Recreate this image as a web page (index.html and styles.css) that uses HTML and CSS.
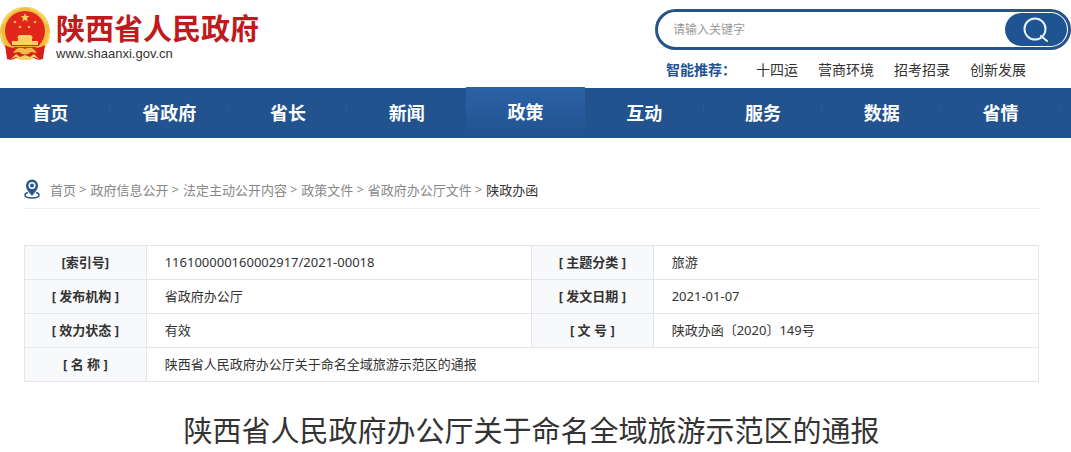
FILE: index.html
```
<!DOCTYPE html>
<html lang="zh-CN">

<head>
  <meta charset="UTF-8" />
  <meta name="viewport" content="width=device-width, initial-scale=1.0" />
  <title>陕西省人民政府</title>
  <link rel="stylesheet" href="styles.css">
</head>

<body>
  <header class="header">
    <a class="logo" href="#">
      <svg class="emblem" viewBox="0 0 52 56" aria-hidden="true">
        <circle cx="25" cy="26" r="25" fill="#f0bd3e" />
        <path d="M3 18Q8 5 20 2M47 18Q42 5 30 2M1 27Q1 36 7 42M49 27Q49 36 43 42" fill="none" stroke="#f8d467" stroke-width="2" />
        <circle cx="25" cy="25" r="20" fill="#e2261c" />
        <path d="M5 39Q11 43 17 42L25 46L33 42Q39 43 45 39L43 53Q38 55 34 52L25 54L16 52Q12 55 7 53Z" fill="#d3201a" />
        <path d="M25 7l1.2 3.1 3.3.1-2.6 2.1.9 3.2-2.8-1.8-2.8 1.8.9-3.2-2.6-2.1 3.3-.1z" fill="#fbd35a" />
        <g fill="#f6bd4a">
          <circle cx="15" cy="16" r="1.3" />
          <circle cx="20" cy="21" r="1.3" />
          <circle cx="29" cy="21" r="1.3" />
          <circle cx="35" cy="16" r="1.3" />
        </g>
        <path d="M19 29h12l2 3h-1v3h6v4H12v-4h6v-3h-1z" fill="#fbd262" />
        <path d="M9 40h32v1H9z" fill="#f5b13c" />
        <path d="M13 47Q18 39 25 43Q32 39 37 47L31 46Q25 51 19 46Z" fill="#f3ba45" />
        <path d="M11 53L16 48L20 51L25 49L30 51L34 48L39 53L34 51L30 54H20L16 51Z" fill="#f8d064" />
      </svg>
      <span class="logo-text">
        <strong class="logo-name">陕西省人民政府</strong>
        <span class="logo-url">www.shaanxi.gov.cn</span>
      </span>
    </a>

    <div class="search">
      <form class="search-box">
        <input class="search-input" type="text" aria-label="请输入关键字" placeholder="请输入关键字" />
        <button class="search-btn" type="button" aria-label="搜索">
          <svg width="26" height="26" viewBox="0 0 26 26" fill="none" stroke="#e6f3fb" stroke-width="2" aria-hidden="true">
            <circle cx="12" cy="12" r="10.500" />
            <path d="M18 19l6 5" stroke-linecap="round" />
          </svg>
        </button>
      </form>
      <div class="hot">
        <strong class="hot-label">智能推荐：</strong>
        <a href="#">十四运</a>
        <a href="#">营商环境</a>
        <a href="#">招考招录</a>
        <a href="#">创新发展</a>
      </div>
    </div>
  </header>

  <nav class="nav">
    <a href="#">首页</a>
    <a href="#">省政府</a>
    <a href="#">省长</a>
    <a href="#">新闻</a>
    <a class="active" href="#">政策</a>
    <a href="#">互动</a>
    <a href="#">服务</a>
    <a href="#">数据</a>
    <a href="#">省情</a>
  </nav>

  <main class="main">
    <div class="crumbs">
      <svg class="pin" width="16" height="20" viewBox="0 0 16 20" aria-hidden="true">
        <path d="M4 13.500C1.500 14 1 15 1 16c0 2 3 3 7 3s7-1 7-3c0-1-.5-2-3-2.500" fill="none" stroke="#2a558c" stroke-width="1.500" />
        <path d="M8 17C5 13 2 10.500 2 6.500a6 6 0 0 1 12 0C14 10.500 11 13 8 17z" fill="#2a558c" />
        <circle cx="8" cy="6.500" r="3.500" fill="#fff" />
        <circle cx="8" cy="6.500" r="2" fill="#2a558c" />
      </svg>
      <a href="#">首页</a><span class="sep">&gt;</span>
      <a href="#">政府信息公开</a><span class="sep">&gt;</span>
      <a href="#">法定主动公开内容</a><span class="sep">&gt;</span>
      <a href="#">政策文件</a><span class="sep">&gt;</span>
      <a href="#">省政府办公厅文件</a><span class="sep">&gt;</span>
      <a class="current" href="#">陕政办函</a>
    </div>

    <table class="info">
      <tr>
        <th>[索引号]</th>
        <td>116100000160002917/2021-00018</td>
        <th>[ 主题分类 ]</th>
        <td>旅游</td>
      </tr>
      <tr>
        <th>[ 发布机构 ]</th>
        <td>省政府办公厅</td>
        <th>[ 发文日期 ]</th>
        <td>2021-01-07</td>
      </tr>
      <tr>
        <th>[ 效力状态 ]</th>
        <td>有效</td>
        <th>[ 文 号 ]</th>
        <td>陕政办函〔2020〕149号</td>
      </tr>
      <tr>
        <th>[ 名 称 ]</th>
        <td colspan="3">陕西省人民政府办公厅关于命名全域旅游示范区的通报</td>
      </tr>
    </table>

    <h1 class="title">陕西省人民政府办公厅关于命名全域旅游示范区的通报</h1>
  </main>
</body>

</html>
```
FILE: styles.css
```
* {
  box-sizing: border-box;
}

body {
  margin: 0;
  font-family: "Noto Sans", "Noto Sans CJK SC", sans-serif;
  font-size: 13px;
  color: #333;
  background: #fff;
  overflow-x: hidden;
}

a {
  color: inherit;
  text-decoration: none;
}

.header {
  display: flex;
  justify-content: space-between;
  height: 88px;
}

.logo {
  display: flex;
  align-items: flex-start;
  gap: 4px;
  padding-top: 6px;
}

.emblem {
  width: 52px;
  height: 56px;
}

.logo-text {
  display: flex;
  flex-direction: column;
  padding-top: 2px;
}

.logo-name {
  font-family: "Noto Sans CJK SC", sans-serif;
  font-size: 29px;
  line-height: 38px;
  font-weight: bold;
  color: #c01a1c;
}

.logo-url {
  font-family: "Liberation Sans", sans-serif;
  font-size: 13px;
  line-height: 16px;
}

.search {
  width: 416px;
  padding-top: 9px;
}

.search-box {
  display: flex;
  height: 41px;
  padding: 1px;
  border: 3px solid #28528a;
  border-radius: 21px;
}

.search-input {
  flex: 1;
  min-width: 0;
  padding: 0 14px;
  border: 0;
  outline: 0;
  background: none;
  font: inherit;
  font-size: 12px;
}

.search-input::placeholder {
  color: #999;
}

.search-btn {
  display: flex;
  align-items: center;
  justify-content: center;
  width: 62px;
  padding: 0;
  border: 0;
  border-radius: 17px;
  background: #1f5493;
  cursor: pointer;
}

.hot {
  display: flex;
  gap: 20px;
  padding: 10px 0 0 11px;
  font-size: 14px;
  line-height: 20px;
}

.hot-label {
  color: #1f5493;
}

.nav {
  display: grid;
  grid-template-columns: repeat(9, 1fr);
  height: 50px;
  padding-right: 2px;
  background: #22538f;
}

.nav a {
  margin-left: -9px;
  margin-right: 9px;
  color: #fff;
  font-size: 18px;
  font-weight: bold;
  line-height: 50px;
  text-align: center;
}

.nav a:not(.active) {
  background: linear-gradient(#2c5c9a, #1c4a82) right center / 1px 18px no-repeat;
}

.nav .active {
  margin-top: -1px;
  background: linear-gradient(#2b61a6, #22538f);
}

.main {
  padding: 34px 32px 0 24px;
}

.crumbs {
  display: flex;
  align-items: center;
  height: 37px;
  padding-bottom: 2px;
  border-bottom: 1px solid #eee;
  color: #888;
}

.pin {
  margin-right: 10px;
}

.sep {
  padding: 0 4px 0 3px;
}

.crumbs .current {
  color: #333;
}

.info {
  width: 100%;
  margin-top: 36px;
  border-collapse: collapse;
  table-layout: fixed;
}

.info th,
.info td {
  height: 34px;
  padding: 0 0 2px;
  border: 1px solid #e3e5e8;
  line-height: 20px;
}

.info th {
  width: 12%;
  background: #f8f9fb;
}

.info td {
  width: 38%;
  padding-left: 18px;
}

.title {
  margin: 29px 0 0;
  font-size: 29px;
  font-weight: normal;
  line-height: 40px;
  text-align: center;
}
```
